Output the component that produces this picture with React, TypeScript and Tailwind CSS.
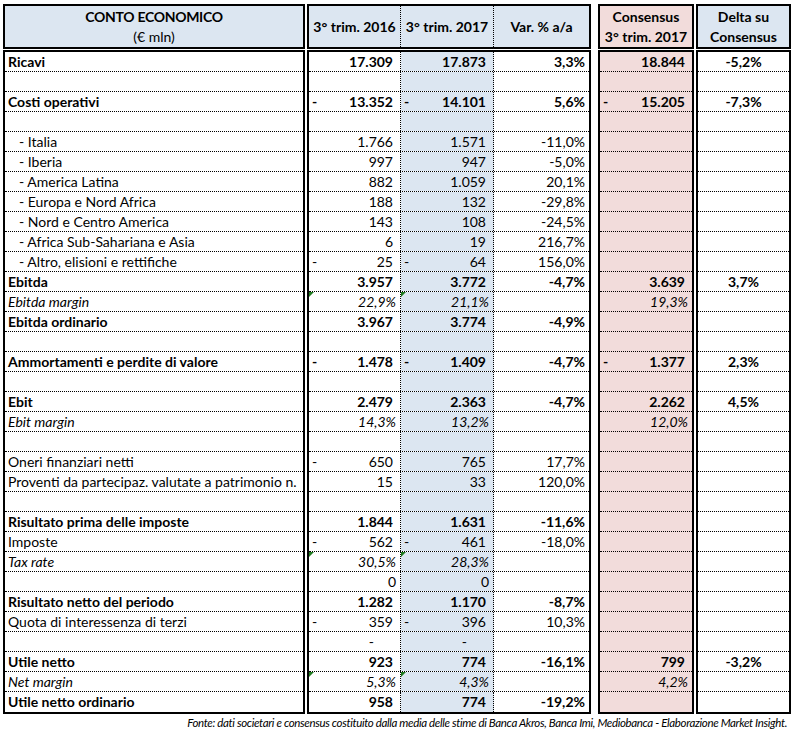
import React from 'react';

type Row = {
  l: string;
  s?: 'b' | 'i' | 'sub';
  b?: string;
  c?: string;
  d?: string;
  e?: string;
  f?: string;
  t?: boolean;
};

// "~" = accounting negative (dash on the left, number on the right)
const ROWS: Row[] = [
  { l: 'Ricavi', s: 'b', b: '17.309', c: '17.873', d: '3,3%', e: '18.844', f: '-5,2%' },
  { l: '' },
  { l: 'Costi operativi', s: 'b', b: '~13.352', c: '~14.101', d: '5,6%', e: '~15.205', f: '-7,3%' },
  { l: '' },
  { l: '- Italia', s: 'sub', b: '1.766', c: '1.571', d: '-11,0%' },
  { l: '- Iberia', s: 'sub', b: '997', c: '947', d: '-5,0%' },
  { l: '- America Latina', s: 'sub', b: '882', c: '1.059', d: '20,1%' },
  { l: '- Europa e Nord Africa', s: 'sub', b: '188', c: '132', d: '-29,8%' },
  { l: '- Nord e Centro America', s: 'sub', b: '143', c: '108', d: '-24,5%' },
  { l: '- Africa Sub-Sahariana e Asia', s: 'sub', b: '6', c: '19', d: '216,7%' },
  { l: '- Altro, elisioni e rettifiche', s: 'sub', b: '~25', c: '~64', d: '156,0%' },
  { l: 'Ebitda', s: 'b', b: '3.957', c: '3.772', d: '-4,7%', e: '3.639', f: '3,7%' },
  { l: 'Ebitda margin', s: 'i', b: '22,9%', c: '21,1%', e: '19,3%', t: true },
  { l: 'Ebitda ordinario', s: 'b', b: '3.967', c: '3.774', d: '-4,9%' },
  { l: '' },
  { l: 'Ammortamenti e perdite di valore', s: 'b', b: '~1.478', c: '~1.409', d: '-4,7%', e: '~1.377', f: '2,3%' },
  { l: '' },
  { l: 'Ebit', s: 'b', b: '2.479', c: '2.363', d: '-4,7%', e: '2.262', f: '4,5%' },
  { l: 'Ebit margin', s: 'i', b: '14,3%', c: '13,2%', e: '12,0%' },
  { l: '' },
  { l: 'Oneri finanziari netti', b: '~650', c: '765', d: '17,7%' },
  { l: 'Proventi da partecipaz. valutate a patrimonio n.', b: '15', c: '33', d: '120,0%' },
  { l: '' },
  { l: 'Risultato prima delle imposte', s: 'b', b: '1.844', c: '1.631', d: '-11,6%' },
  { l: 'Imposte', b: '~562', c: '~461', d: '-18,0%' },
  { l: 'Tax rate', s: 'i', b: '30,5%', c: '28,3%', t: true },
  { l: '', b: '0', c: '0' },
  { l: 'Risultato netto del periodo', s: 'b', b: '1.282', c: '1.170', d: '-8,7%' },
  { l: 'Quota di interessenza di terzi', b: '~359', c: '~396', d: '10,3%' },
  { l: '', b: '-', c: '-' },
  { l: 'Utile netto', s: 'b', b: '923', c: '774', d: '-16,1%', e: '799', f: '-3,2%' },
  { l: 'Net margin', s: 'i', b: '5,3%', c: '4,3%', e: '4,2%', t: true },
  { l: 'Utile netto ordinario', s: 'b', b: '958', c: '774', d: '-19,2%' },
];

const last = ROWS.length - 1;

function rowText(r: Row) {
  if (r.s === 'b') return 'font-bold';
  if (r.s === 'i') return 'italic';
  return '';
}

function rowLine(i: number) {
  return i === last ? 'h-5' : 'h-5 border-b border-dotted border-black';
}

function Triangle() {
  return (
    <span className="absolute left-0 top-0 h-0 w-0 border-t-[5px] border-r-[5px] border-t-[#1f7a1f] border-r-transparent" />
  );
}

function Amount({ v, tri }: { v?: string; tri?: boolean }) {
  if (!v) return tri ? <Triangle /> : null;
  const neg = v.startsWith('~');
  const txt = neg ? v.slice(1) : v;
  const pad = txt === '-' ? 'pr-[26px]' : txt.endsWith('%') || txt === '0' ? 'pr-[4px]' : 'pr-[7px]';
  return (
    <>
      {tri && <Triangle />}
      {neg && <span className="pl-[3px]">-</span>}
      <span className={`ml-auto ${pad}`}>{txt}</span>
    </>
  );
}

export default function App() {
  return (
    <div className="w-[793px] h-[732px] bg-white pl-[3px] pt-[4px] font-['Lato',sans-serif] text-[14px] leading-5 text-black">
      <div className="flex">
        {/* Label column */}
        <div className="flex w-[302px] flex-col">
          <div className="flex h-[45px] flex-col items-center justify-center border-2 border-black bg-[#dce6f1]">
            <div className="font-bold tracking-[-0.3px]">CONTO ECONOMICO</div>
            <div>(€ mln)</div>
          </div>
          <div className="mt-px border-2 border-black">
            {ROWS.map((r, i) => (
              <div
                key={i}
                className={`flex items-center whitespace-nowrap ${rowLine(i)} ${rowText(r)} ${r.s === 'sub' ? 'pl-[14px]' : 'pl-[3px]'}`}
              >
                {r.l}
              </div>
            ))}
          </div>
        </div>

        <div className="w-[2px]" />

        {/* Quarters + variation */}
        <div className="flex w-[284px] flex-col">
          <div className="flex h-[45px] border-2 border-black bg-[#dce6f1] font-bold">
            <div className="flex w-[92px] items-center justify-center border-r border-dotted border-black">3° trim. 2016</div>
            <div className="flex w-[93px] items-center justify-center border-r border-dotted border-black">3° trim. 2017</div>
            <div className="flex w-[95px] items-center justify-center">Var. % a/a</div>
          </div>
          <div className="mt-px border-2 border-black">
            {ROWS.map((r, i) => (
              <div key={i} className={`flex ${rowLine(i)} ${rowText(r)}`}>
                <div className="relative flex w-[92px] items-center border-r border-dotted border-black">
                  <Amount v={r.b} tri={r.t} />
                </div>
                <div className="relative flex w-[93px] items-center border-r border-dotted border-black bg-[#dce6f1]">
                  <Amount v={r.c} tri={r.t} />
                </div>
                <div className="flex w-[95px] items-center justify-end pr-[4px]">{r.d}</div>
              </div>
            ))}
          </div>
        </div>

        <div className="w-[7px]" />

        {/* Consensus */}
        <div className="flex w-[96px] flex-col">
          <div className="flex h-[45px] flex-col items-center justify-center border-2 border-black bg-[#f2dcdb] font-bold">
            <div>Consensus</div>
            <div>3° trim. 2017</div>
          </div>
          <div className="mt-px border-2 border-black bg-[#f2dcdb]">
            {ROWS.map((r, i) => (
              <div key={i} className={`flex items-center ${rowLine(i)} ${rowText(r)}`}>
                <Amount v={r.e} />
              </div>
            ))}
          </div>
        </div>

        <div className="w-[2px]" />

        {/* Delta */}
        <div className="flex w-[95px] flex-col">
          <div className="flex h-[45px] flex-col items-center justify-center border-2 border-black bg-[#dce6f1] font-bold">
            <div>Delta su</div>
            <div>Consensus</div>
          </div>
          <div className="mt-px border-2 border-black">
            {ROWS.map((r, i) => (
              <div key={i} className={`flex items-center justify-center ${rowLine(i)} ${rowText(r)}`}>
                {r.f}
              </div>
            ))}
          </div>
        </div>
      </div>

      <p className="mt-[1px] pr-[6px] text-right text-[11.5px] italic leading-4 tracking-[-0.35px]">
        Fonte: dati societari e consensus costituito dalla media delle stime di Banca Akros, Banca Imi, Mediobanca - Elaborazione Market Insight.
      </p>
    </div>
  );
}
